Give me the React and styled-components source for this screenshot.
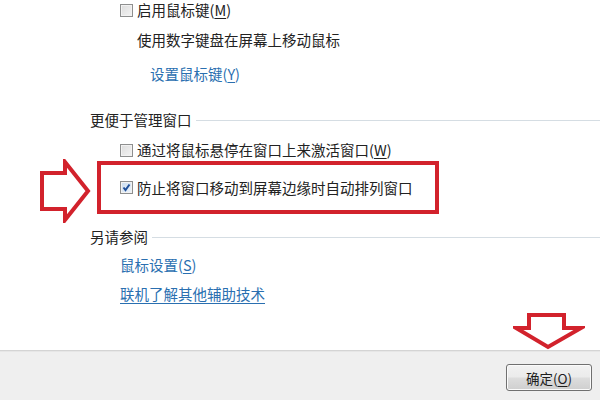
import React from 'react';
import styled, { createGlobalStyle } from 'styled-components';

const GlobalStyle = createGlobalStyle`
  html, body {
    margin: 0;
    padding: 0;
    background: #ffffff;
  }
  body {
    font-family: "Noto Sans CJK SC", "Noto Sans", sans-serif;
    font-size: 14px;
    color: #222222;
  }
`;

const Page = styled.div`
  width: 600px;
  height: 400px;
  display: flex;
  flex-direction: column;
  overflow: hidden;
  position: relative;
`;

const Content = styled.div`
  flex: 1;
  display: flex;
  flex-direction: column;
  padding-left: 90px;
  padding-top: 1px;
`;

const CheckRow = styled.div`
  display: flex;
  align-items: center;
  height: 18px;
  margin-top: ${(p) => p.$top || 0}px;
  margin-left: ${(p) => p.$indent || 0}px;
  white-space: nowrap;
`;

const Box = styled.span`
  box-sizing: border-box;
  width: 13px;
  height: 13px;
  border: 1px solid #8e8f8f;
  background: ${(p) =>
    p.$checked
      ? 'linear-gradient(135deg, #c9dcef 0%, #eef4fa 100%)'
      : 'linear-gradient(135deg, #dcdcdc 0%, #f4f4f4 100%)'};
  box-shadow: inset 0 0 0 1px #f2f2f2;
  margin-right: 4px;
  display: flex;
  align-items: center;
  justify-content: center;
  flex-shrink: 0;
`;

const Text = styled.div`
  height: 18px;
  line-height: 18px;
  font-size: 14.5px;
  white-space: nowrap;
  margin-top: ${(p) => p.$top || 0}px;
  margin-left: ${(p) => p.$indent || 0}px;
`;

const Link = styled(Text)`
  color: #2a6fb0;
  text-decoration: ${(p) => (p.$underline ? 'underline' : 'none')};
  text-underline-offset: 3px;
`;

const Key = styled.span`
  text-decoration: underline;
  text-underline-offset: 2px;
`;

const Section = styled.div`
  display: flex;
  align-items: center;
  height: 18px;
  line-height: 18px;
  font-size: 14.5px;
  margin-top: ${(p) => p.$top || 0}px;
  white-space: nowrap;
  &::after {
    content: '';
    flex: 1;
    height: 1px;
    background: #d5dde3;
    margin-left: 4px;
    margin-top: 1px;
  }
`;

const Highlight = styled.div`
  position: relative;
  box-sizing: border-box;
  width: 342px;
  height: 53px;
  margin-left: 7px;
  margin-top: 2px;
  border: 4px solid #d2222c;
  display: flex;
  align-items: center;
  padding-left: 19px;
`;

const LeftArrow = styled.svg`
  position: absolute;
  left: -63px;
  top: -6px;
`;

const DownArrow = styled.svg`
  position: absolute;
  left: 513px;
  top: 312px;
`;

const Footer = styled.div`
  height: 49px;
  background: #efefef;
  border-top: 1px solid #d4d4d4;
  box-shadow: inset 0 1px 0 #e6e6e6;
  display: flex;
  justify-content: flex-end;
  align-items: flex-start;
  padding-right: 8px;
`;

const Button = styled.div`
  box-sizing: border-box;
  width: 86px;
  height: 27px;
  margin-top: 13px;
  border: 1px solid #707070;
  border-radius: 3px;
  background: linear-gradient(#f2f2f2 0%, #ebebeb 48%, #dddddd 52%, #cfcfcf 100%);
  box-shadow: inset 0 0 0 1px #fbfbfb;
  display: flex;
  align-items: center;
  justify-content: center;
  font-size: 13.5px;
  color: #1e1e1e;
`;

const Check = () => (
  <svg width="9" height="9" viewBox="0 0 9 9">
    <path d="M1.5 4.5 L3.5 7 L7.5 1.5" fill="none" stroke="#1f4f9a" strokeWidth="2" />
  </svg>
);

const App = () => (
  <Page>
    <GlobalStyle />
    <Content>
      <CheckRow $indent={30}>
        <Box />
        <Text>启用鼠标键(<Key>M</Key>)</Text>
      </CheckRow>
      <Text $top={12} $indent={47}>使用数字键盘在屏幕上移动鼠标</Text>
      <Link $top={16} $indent={60}>设置鼠标键(<Key>Y</Key>)</Link>

      <Section $top={28}>更便于管理窗口</Section>
      <CheckRow $top={12} $indent={30}>
        <Box />
        <Text>通过将鼠标悬停在窗口上来激活窗口(<Key>W</Key>)</Text>
      </CheckRow>
      <Highlight>
        <LeftArrow width="54" height="64" viewBox="0 0 54 64">
          <path
            d="M4 14 L27 14 L27 3 L50 32 L27 61 L27 50 L4 50 Z"
            fill="#ffffff"
            stroke="#d2222c"
            strokeWidth="4"
            strokeLinejoin="miter"
          />
        </LeftArrow>
        <Box $checked>
          <Check />
        </Box>
        <Text>防止将窗口移动到屏幕边缘时自动排列窗口</Text>
      </Highlight>

      <Section $top={14}>另请参阅</Section>
      <Link $top={10} $indent={30}>鼠标设置(<Key>S</Key>)</Link>
      <Link $top={11} $indent={30} $underline>联机了解其他辅助技术</Link>
    </Content>
    <DownArrow width="72" height="38" viewBox="0 0 72 38">
      <path
        d="M16 3 L51 3 L51 16 L68 16 L35 35 L3 16 L16 16 Z"
        fill="#ffffff"
        stroke="#d2222c"
        strokeWidth="4"
      />
    </DownArrow>
    <Footer>
      <Button>确定(<Key>O</Key>)</Button>
    </Footer>
  </Page>
);

export default App;
